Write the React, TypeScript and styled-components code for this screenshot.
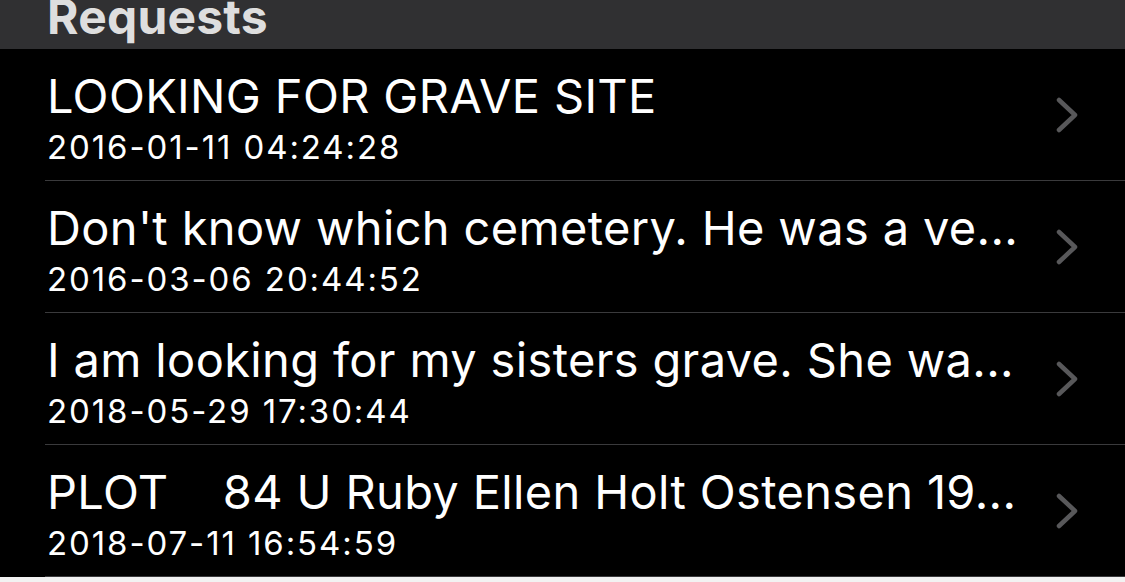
import React from "react";
import styled, { createGlobalStyle } from "styled-components";

const Global = createGlobalStyle`
  html, body { margin: 0; padding: 0; background: #f2f2f2; }
  body { font-family: Inter, "Noto Sans", "Liberation Sans", sans-serif; -webkit-font-smoothing: antialiased; }
`;

const Screen = styled.div`
  width: 1125px;
  height: 582px;
  overflow: hidden;
  display: flex;
  flex-direction: column;
  background: #000;
`;

const Header = styled.div`
  height: 49px;
  flex: none;
  background: #303032;
  display: flex;
  align-items: flex-end;
  padding-left: 47px;
  overflow: hidden;
`;

const HeaderTitle = styled.h1`
  margin: 0 0 8px 0;
  font-size: 48px;
  font-weight: 700;
  color: #dedede;
  line-height: 1;
  letter-spacing: 0.2px;
`;

const List = styled.div`
  display: flex;
  flex-direction: column;
  flex: none;
`;

const RowBox = styled.div`
  height: 131px;
  display: flex;
  align-items: center;
  padding-left: 47px;
`;

const RowInner = styled.div`
  flex: 1;
  min-width: 0;
  display: flex;
  flex-direction: column;
  padding-top: 4px;
`;

const Title = styled.div`
  color: #fff;
  font-size: 47px;
  line-height: 56px;
  white-space: pre;
  letter-spacing: 0.35px;
`;

const DateText = styled.div`
  color: #fff;
  font-size: 33px;
  line-height: 38px;
  margin-top: 4px;
  letter-spacing: 1.9px;
`;

const Chevron = styled.svg`
  width: 24px;
  height: 36px;
  flex: none;
  margin: 0 46px 0 20px;
`;

const Separator = styled.div<{ $inset: number }>`
  margin-left: ${(p) => p.$inset}px;
  height: 1px;
  background: #3a3a3c;
`;

const BottomStrip = styled.div`
  flex: 1;
  background: #f2f2f2;
`;

const items = [
  { title: "LOOKING FOR GRAVE SITE", date: "2016-01-11 04:24:28" },
  { title: "Don't know which cemetery. He was a ve...", date: "2016-03-06 20:44:52" },
  { title: "I am looking for my sisters grave. She wa...", date: "2018-05-29 17:30:44" },
  { title: "PLOT    84 U Ruby Ellen Holt Ostensen 19...", date: "2018-07-11 16:54:59" },
];

export default function App() {
  return (
    <>
      <Global />
      <Screen>
        <Header>
          <HeaderTitle>Requests</HeaderTitle>
        </Header>
        <List>
          {items.map((it, i) => (
            <React.Fragment key={i}>
              <RowBox>
                <RowInner>
                  <Title>{it.title}</Title>
                  <DateText>{it.date}</DateText>
                </RowInner>
                <Chevron viewBox="0 0 24 36">
                  <path d="M4 3 L20 18 L4 33" fill="none" stroke="#58585a" strokeWidth="4.5" strokeLinecap="round" strokeLinejoin="round" />
                </Chevron>
              </RowBox>
              <Separator $inset={45} />
            </React.Fragment>
          ))}
        </List>
        <BottomStrip />
      </Screen>
    </>
  );
}
